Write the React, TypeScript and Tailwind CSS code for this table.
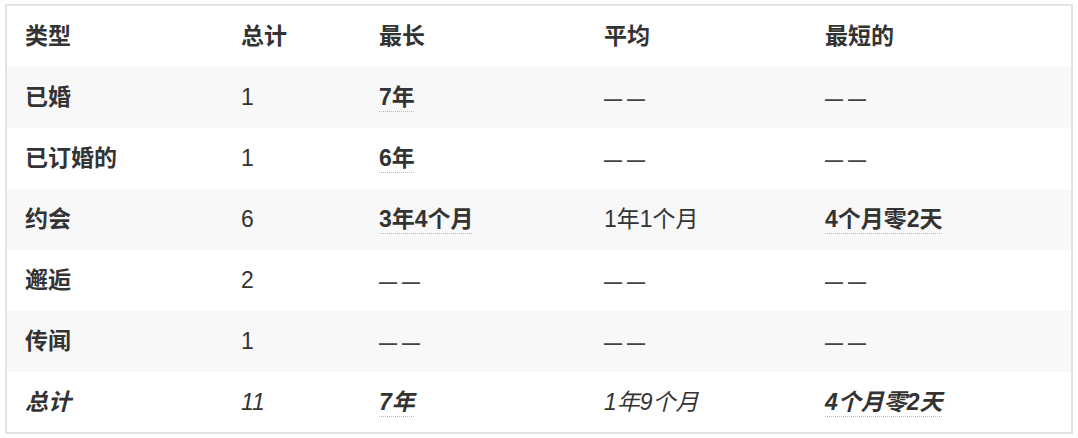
const Dash = () => (
  <span className="font-['Liberation_Sans',sans-serif] text-[18px] font-bold not-italic text-[#444]">— —</span>
);

const Abbr = ({ children }: { children: React.ReactNode }) => (
  <span className="font-bold underline decoration-dotted decoration-[#bbb] decoration-1 underline-offset-[6px]">
    {children}
  </span>
);

type Row = {
  type: string;
  total: string;
  longest: string | null;
  average: string | null;
  shortest: string | null;
};

const rows: Row[] = [
  { type: '已婚', total: '1', longest: '7年', average: null, shortest: null },
  { type: '已订婚的', total: '1', longest: '6年', average: null, shortest: null },
  { type: '约会', total: '6', longest: '3年4个月', average: '1年1个月', shortest: '4个月零2天' },
  { type: '邂逅', total: '2', longest: null, average: null, shortest: null },
  { type: '传闻', total: '1', longest: null, average: null, shortest: null },
];

export default function App() {
  return (
    <div className="bg-white px-[5px] py-[4px] font-['Liberation_Sans','Noto_Sans_CJK_SC',sans-serif] text-[23px] text-[#333]">
      <table className="w-full table-fixed border-collapse border-2 border-[#e3e3e3]">
        <colgroup>
          <col className="w-[217px]" />
          <col className="w-[138px]" />
          <col className="w-[225px]" />
          <col className="w-[221px]" />
          <col />
        </colgroup>
        <thead>
          <tr className="h-[62px] bg-white">
            <th className="pl-[18px] text-left font-bold">类型</th>
            <th className="pl-[18px] text-left font-bold">总计</th>
            <th className="pl-[18px] text-left font-bold">最长</th>
            <th className="pl-[18px] text-left font-bold">平均</th>
            <th className="pl-[18px] text-left font-bold">最短的</th>
          </tr>
        </thead>
        <tbody>
          {rows.map((r, i) => (
            <tr key={r.type} className={i % 2 === 0 ? 'h-[61px] bg-[#f8f8f8]' : 'h-[61px] bg-white'}>
              <td className="pl-[18px] font-bold">{r.type}</td>
              <td className="pl-[18px]">{r.total}</td>
              <td className="pl-[18px]">{r.longest ? <Abbr>{r.longest}</Abbr> : <Dash />}</td>
              <td className="pl-[18px]">{r.average ?? <Dash />}</td>
              <td className="pl-[18px]">{r.shortest ? <Abbr>{r.shortest}</Abbr> : <Dash />}</td>
            </tr>
          ))}
          <tr className="h-[61px] bg-white italic">
            <td className="pl-[18px] font-bold">总计</td>
            <td className="pl-[18px]">11</td>
            <td className="pl-[18px]"><Abbr>7年</Abbr></td>
            <td className="pl-[18px]">1年9个月</td>
            <td className="pl-[18px]"><Abbr>4个月零2天</Abbr></td>
          </tr>
        </tbody>
      </table>
    </div>
  );
}
